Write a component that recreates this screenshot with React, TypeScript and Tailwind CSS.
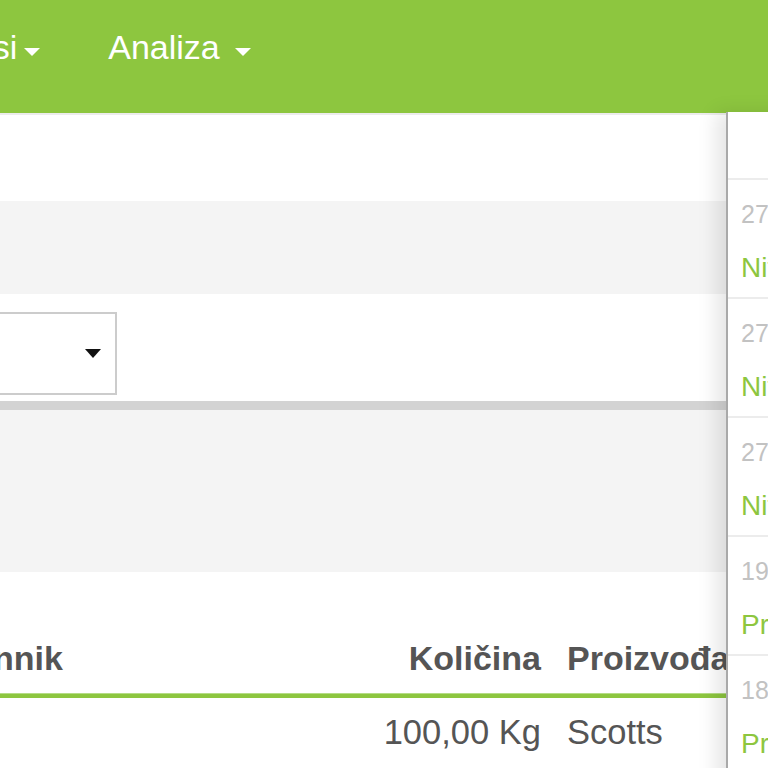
import React from 'react';

const notices = [
  { date: '27.03.2015.', title: 'Nitrogen - niska zaliha' },
  { date: '27.03.2015.', title: 'Nitrogen - istek roka' },
  { date: '27.03.2015.', title: 'Nitrogen - narudžba' },
  { date: '19.03.2015.', title: 'Prskanje - parcela 4' },
  { date: '18.03.2015.', title: 'Prihrana - parcela 2' },
];

function Caret({ className }: { className: string }) {
  return (
    <span
      className={`inline-block w-0 h-0 border-t-[8px] border-x-[8px] border-x-transparent border-t-white ${className}`}
    />
  );
}

function NoticesDropdown() {
  return (
    <div className="absolute left-[726px] top-[112px] w-[300px] h-[700px] bg-white border-l-2 border-[#a9a9a9] shadow-[-10px_0_18px_rgba(0,0,0,0.10)]">
      <div className="h-[68px] border-b-2 border-[#ececec]" />
      {notices.map((n, i) => (
        <div key={i} className="h-[119px] border-b-2 border-[#ececec] pl-[13px] pt-[22px]">
          <div className="text-[25px] leading-[25px] text-[#c2c2c2] whitespace-nowrap">{n.date}</div>
          <div className="mt-[27px] text-[28px] leading-[28px] text-[#8dc63f] whitespace-nowrap">{n.title}</div>
        </div>
      ))}
    </div>
  );
}

export default function App() {
  return (
    <div className="relative w-[768px] h-[768px] overflow-hidden bg-white font-['Liberation_Sans',Arial,sans-serif]">
      {/* navbar */}
      <nav className="h-[113px] bg-[#8dc63f] flex items-start pt-[30px] text-white text-[34px] leading-[34px] whitespace-nowrap">
        <span className="ml-[-98px]">Resursi</span>
        <Caret className="ml-[7px] mt-[18px]" />
        <span className="ml-[68px]">Analiza</span>
        <Caret className="ml-[15px] mt-[18px]" />
      </nav>

      <div className="h-[88px] border-t-2 border-[#ececec]" />

      <div className="h-[93px] bg-[#f4f4f4]" />

      {/* filter */}
      <div className="h-[107px] pt-[18px]">
        <div className="ml-[-20px] w-[137px] h-[83px] border-2 border-[#cccccc] bg-white flex items-center justify-end pr-[14px]">
          <span className="inline-block w-0 h-0 border-t-[9px] border-x-[8px] border-x-transparent border-t-[#111]" />
        </div>
      </div>

      <div className="h-[9px] bg-[#d3d3d3]" />
      <div className="h-[162px] bg-[#f4f4f4]" />

      {/* table */}
      <div className="text-[34px] leading-[34px] text-[#555]">
        <div className="flex pt-[69px] pb-[18px] font-bold whitespace-nowrap">
          <div className="flex-1 overflow-hidden">
            <span className="ml-[-7px]">nnik</span>
          </div>
          <div className="w-[200px] text-right pr-[12px] mr-[1px]">Količina</div>
          <div className="w-[214px] pl-[13px]">Proizvođač</div>
        </div>
        <div className="h-[5px] bg-[#8dc63f] border-t border-[#b5dc85]" />
        <div className="flex pt-[17px] whitespace-nowrap text-[34.5px]">
          <div className="flex-1" />
          <div className="w-[200px] text-right pr-[12px] mr-[1px]">100,00 Kg</div>
          <div className="w-[214px] pl-[13px]">Scotts</div>
        </div>
      </div>

      <NoticesDropdown />
    </div>
  );
}
